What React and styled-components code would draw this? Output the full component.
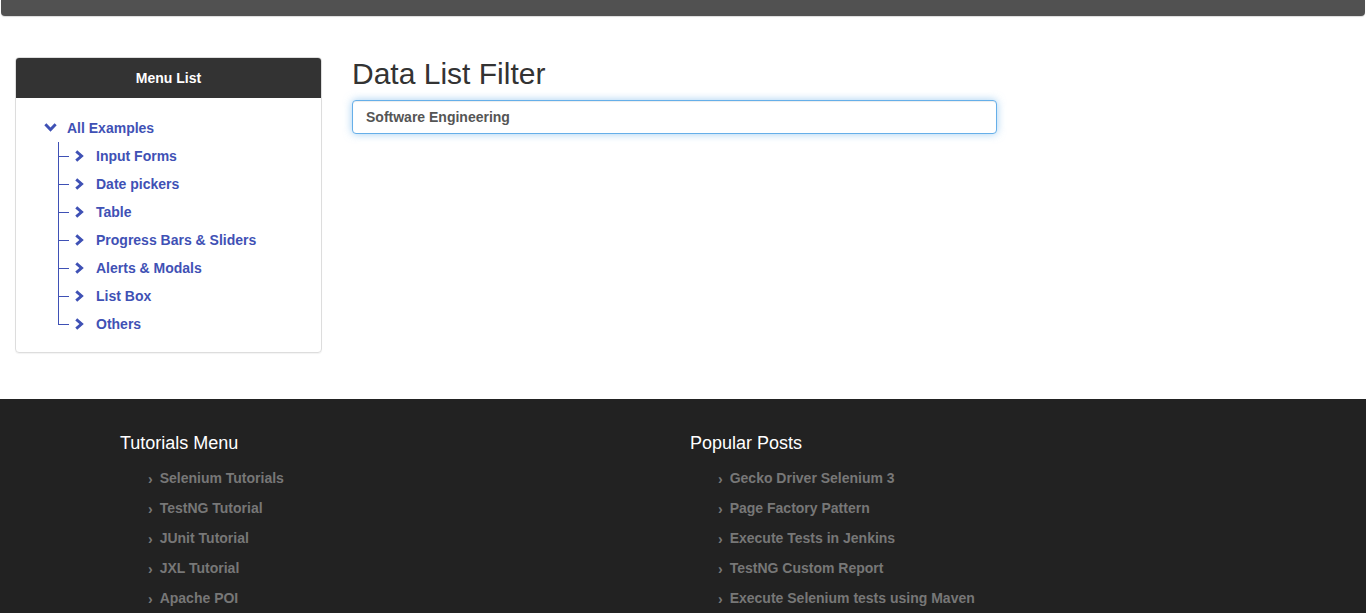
import { createGlobalStyle, styled } from "styled-components";

const GlobalStyle = createGlobalStyle`
    body {
        margin: 0;
        font-family: "Liberation Sans", Arial, sans-serif;
        font-size: 14px;
        color: #333;
        background: #fff;
    }

    * {
        box-sizing: border-box;
    }
`

const Page = styled.div`
    min-height: 100vh;
    display: flex;
    flex-direction: column;
`

const NavBar = styled.div`
    height: 16px;
    margin: 0 1px;
    background-color: #515151;
    border-radius: 0 0 4px 4px;
    box-shadow: 0 1px 1px rgba(0, 0, 0, 0.15);
`

const Content = styled.div`
    display: grid;
    grid-template-columns: 337px 1fr;
    padding-top: 41px;
    padding-bottom: 46px;
`

const SideCol = styled.div`
    padding: 0 15px;
`

const MainCol = styled.div`
    padding: 0 15px;
`

const Panel = styled.div`
    border: 1px solid #ddd;
    border-radius: 4px;
    box-shadow: 0 1px 1px rgba(0, 0, 0, 0.05);
    overflow: hidden;
`

const PanelHeading = styled.div`
    height: 40px;
    background-color: #333;
    color: #fff;
    font-weight: bold;
    font-size: 14px;
    display: flex;
    align-items: center;
    justify-content: center;
`

const PanelBody = styled.div`
    padding: 16px 0 14px 28px;
`

const RootRow = styled.div`
    display: flex;
    align-items: center;
    gap: 10px;
    height: 28px;
    color: #3f51b5;
    font-weight: bold;
`

const ChildList = styled.ul`
    list-style: none;
    margin: 0 0 0 14px;
    padding: 0;
`

const ChildItem = styled.li`
    position: relative;
    display: flex;
    align-items: center;
    height: 28px;
    padding-left: 17px;
    gap: 11px;
    color: #3f51b5;
    font-weight: bold;

    &::before {
        content: "";
        position: absolute;
        left: 0;
        top: 0;
        width: 10px;
        height: 14px;
        border-left: 1px solid #3f51b5;
        border-bottom: 1px solid #3f51b5;
    }

    &:not(:last-child)::after {
        content: "";
        position: absolute;
        left: 0;
        top: 14px;
        bottom: 0;
        border-left: 1px solid #3f51b5;
    }
`

const Title = styled.h2`
    margin: 0 0 10px;
    font-size: 30px;
    font-weight: 500;
    line-height: 33px;
    color: #333;
`

const SearchInput = styled.input`
    display: block;
    width: 645px;
    height: 34px;
    padding: 6px 13px;
    border: 1px solid #66afe9;
    border-radius: 4px;
    outline: none;
    font-family: "Liberation Sans", Arial, sans-serif;
    font-size: 14px;
    font-weight: bold;
    color: #555;
    box-shadow: inset 0 1px 1px rgba(0, 0, 0, 0.075), 0 0 8px rgba(102, 175, 233, 0.6);
`

const Footer = styled.footer`
    flex: 1;
    background-color: #222;
    display: grid;
    grid-template-columns: 570px 1fr;
    padding: 34px 17px 0 120px;
`

const FooterTitle = styled.h3`
    margin: 0 0 10px;
    font-size: 18px;
    font-weight: normal;
    line-height: 20px;
    color: #fff;
`

const FooterList = styled.ul`
    list-style: none;
    margin: 0;
    padding: 0 0 0 28px;
`

const FooterItem = styled.li`
    display: flex;
    align-items: center;
    gap: 7px;
    height: 30px;
    color: #777;
    font-weight: bold;
    font-size: 14px;

    &::before {
        content: "›";
        font-size: 14px;
        padding-top: 2px;
    }
`

const ChevronRight = () => (
    <svg width="10" height="12" viewBox="0 0 10 12">
        <path d="M2.2 0.3 L8.8 6 L2.2 11.7 L0.3 9.6 L4.4 6 L0.3 2.4 Z" fill="#3f51b5" />
    </svg>
)

const ChevronDown = () => (
    <svg width="13" height="10" viewBox="0 0 13 10">
        <path d="M0.3 2.3 L2.4 0.3 L6.5 4.4 L10.6 0.3 L12.7 2.3 L6.5 8.8 Z" fill="#3f51b5" />
    </svg>
)

const examples = [
    "Input Forms",
    "Date pickers",
    "Table",
    "Progress Bars & Sliders",
    "Alerts & Modals",
    "List Box",
    "Others",
]

const tutorials = [
    "Selenium Tutorials",
    "TestNG Tutorial",
    "JUnit Tutorial",
    "JXL Tutorial",
    "Apache POI",
]

const posts = [
    "Gecko Driver Selenium 3",
    "Page Factory Pattern",
    "Execute Tests in Jenkins",
    "TestNG Custom Report",
    "Execute Selenium tests using Maven",
]

export default function App() {

    return (

        <Page>

            <GlobalStyle />

            <NavBar />

            <Content>

                <SideCol>
                    <Panel>
                        <PanelHeading>Menu List</PanelHeading>
                        <PanelBody>
                            <RootRow>
                                <ChevronDown />
                                All Examples
                            </RootRow>
                            <ChildList>
                                {examples.map((item) => (
                                    <ChildItem key={item}>
                                        <ChevronRight />
                                        {item}
                                    </ChildItem>
                                ))}
                            </ChildList>
                        </PanelBody>
                    </Panel>
                </SideCol>

                <MainCol>
                    <Title>Data List Filter</Title>
                    <SearchInput type="text" defaultValue="Software Engineering" />
                </MainCol>

            </Content>

            <Footer>

                <div>
                    <FooterTitle>Tutorials Menu</FooterTitle>
                    <FooterList>
                        {tutorials.map((item) => (
                            <FooterItem key={item}>{item}</FooterItem>
                        ))}
                    </FooterList>
                </div>

                <div>
                    <FooterTitle>Popular Posts</FooterTitle>
                    <FooterList>
                        {posts.map((item) => (
                            <FooterItem key={item}>{item}</FooterItem>
                        ))}
                    </FooterList>
                </div>

            </Footer>

        </Page>

    )

}
